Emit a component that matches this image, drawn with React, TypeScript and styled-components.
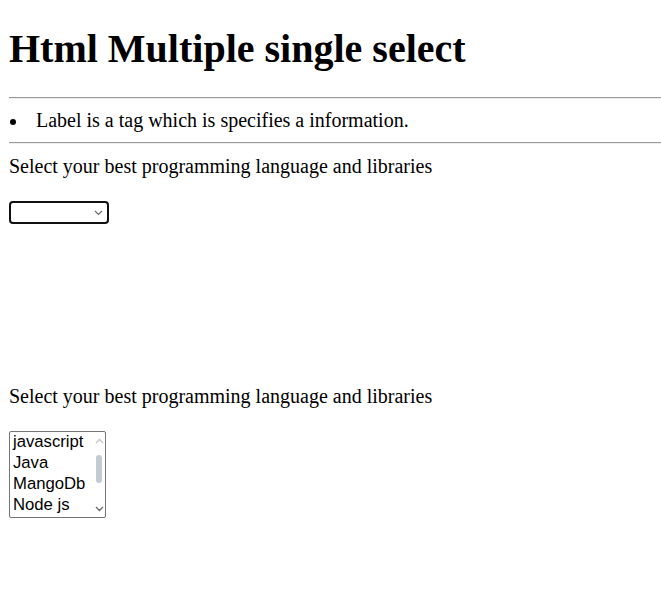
import React from 'react'
import styled, { createGlobalStyle } from 'styled-components'

const GlobalStyle = createGlobalStyle`
  html, body {
    margin: 0;
    background: #ffffff;
  }
  body {
    font-family: "Liberation Serif", "Times New Roman", serif;
    font-size: 20px;
    color: #000000;
  }
`

const Page = styled.div`
  display: flex;
  flex-direction: column;
  padding: 26px 0 0 9px;
`

const Title = styled.h1`
  margin: 0;
  font-size: 40px;
  font-weight: 700;
  line-height: 46px;
`

const Rule = styled.hr<{ $top: number }>`
  margin: ${({ $top }) => $top}px 0 0 0;
  border: none;
  border-top: 1px solid #9a9a9a;
  border-bottom: 1px solid #eeeeee;
  height: 0;
`

const List = styled.ul`
  margin: 0;
  padding: 0;
  list-style: none;
`

const Item = styled.li`
  display: flex;
  align-items: center;
  height: 43px;
`

const Bullet = styled.span`
  width: 6px;
  height: 6px;
  border-radius: 50%;
  background: #000000;
  margin: 3px 20px 0 1px;
  flex: none;
`

const Prompt = styled.label<{ $top: number }>`
  display: block;
  margin-top: ${({ $top }) => $top}px;
  line-height: 23px;
`

const Dropdown = styled.div`
  position: relative;
  margin-top: 23px;
  width: 100px;
  height: 23px;
  box-sizing: border-box;
  border: 2px solid #101010;
  border-radius: 4px;
`

const DropArrow = styled.svg`
  position: absolute;
  right: 4px;
  top: 7px;
`

const ListBox = styled.div`
  display: flex;
  margin-top: 23px;
  width: 97px;
  height: 87px;
  box-sizing: border-box;
  border: 1px solid #767676;
  border-radius: 2px;
  font-family: "Liberation Sans", Arial, sans-serif;
  font-size: 16.7px;
  overflow: hidden;
`

const Options = styled.div`
  flex: 1;
  padding-left: 3px;
  margin-top: -1px;
`

const Option = styled.div`
  height: 21px;
  line-height: 21px;
  white-space: nowrap;
`

const ScrollTrack = styled.div`
  width: 12px;
  display: flex;
  flex-direction: column;
  align-items: center;
  justify-content: space-between;
  padding: 6px 0 5px;
`

const Thumb = styled.div`
  width: 6px;
  height: 28px;
  border-radius: 3px;
  background: #c5cbd3;
  margin-top: 11px;
  flex: none;
`

const Spacer = styled.div`
  flex: 1;
`

const Chevron = ({ up, color }: { up?: boolean; color: string }) => (
  <svg width="9" height="6" viewBox="0 0 9 6">
    <path
      d={up ? 'M1 5 L4.5 1.5 L8 5' : 'M1 1 L4.5 4.5 L8 1'}
      fill="none"
      stroke={color}
      strokeWidth="1.4"
    />
  </svg>
)

const languages = ['javascript', 'Java', 'MangoDb', 'Node js']

export default function App() {
  return (
    <>
      <GlobalStyle />
      <Page>
        <Title>Html Multiple single select</Title>
        <Rule $top={25} />
        <List>
          <Item>
            <Bullet />
            <span>Label is a tag which is specifies a information.</span>
          </Item>
        </List>
        <Rule $top={0} />
        <Prompt $top={11}>Select your best programming language and libraries</Prompt>
        <Dropdown>
          <DropArrow width="9" height="6" viewBox="0 0 9 6">
            <path d="M1 1 L4.5 4.5 L8 1" fill="none" stroke="#6b6b6b" strokeWidth="1.2" />
          </DropArrow>
        </Dropdown>
        <Prompt $top={161}>Select your best programming language and libraries</Prompt>
        <ListBox>
          <Options>
            {languages.map((l) => (
              <Option key={l}>{l}</Option>
            ))}
          </Options>
          <ScrollTrack>
            <Chevron up color="#c4c4c4" />
            <Thumb />
            <Spacer />
            <Chevron color="#6e6e6e" />
          </ScrollTrack>
        </ListBox>
      </Page>
    </>
  )
}
